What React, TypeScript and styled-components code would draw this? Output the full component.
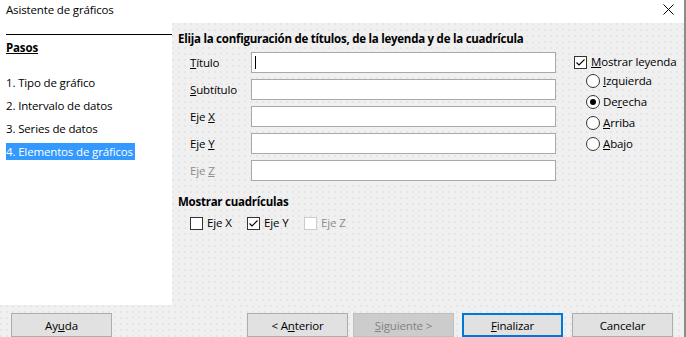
import React from "react";
import styled, { createGlobalStyle } from "styled-components";

const Global = createGlobalStyle`
  html, body { margin: 0; padding: 0; background: #ffffff; }
  body { font-family: "Open Sans", "Noto Sans", sans-serif; font-size: 12px; color: #000; }
  * { box-sizing: border-box; }
`;

const Window = styled.div`
  width: 686px;
  height: 337px;
  display: flex;
  flex-direction: column;
  border-right: 2px solid #8c8c8c;
  overflow: hidden;
  font-family: "Open Sans", sans-serif;
  font-size: 11.5px;
  letter-spacing: -0.15px;
`;

const TitleBar = styled.div`
  height: 23px;
  flex: none;
  display: flex;
  align-items: center;
  justify-content: space-between;
  padding: 0 10px 4px 6px;
  background: #fff;
`;

const CloseIcon = () => (
  <svg width="11" height="11" viewBox="0 0 11 11">
    <path d="M0.5 0.5 L10.5 10.5 M10.5 0.5 L0.5 10.5" stroke="#000" strokeWidth="1" />
  </svg>
);

const Body = styled.div`
  flex: 1;
  display: flex;
  min-height: 0;
`;

const dots = `
  background-color: #f0f0f0;
  background-image: radial-gradient(circle at 1px 1px, #e5e5e5 0.7px, transparent 0.8px);
  background-size: 6px 6px;
`;

const StepsPane = styled.div`
  width: 172px;
  flex: none;
  background: #fff;
  padding-top: 11px;
  padding-left: 6px;
`;

const Rule = styled.div`
  height: 1px;
  background: #000;
  margin-bottom: 5px;
`;

const StepsTitle = styled.div`
  font-weight: 700;
  text-decoration: underline;
  height: 16px;
  line-height: 16px;
  margin-bottom: 18px;
`;

const Step = styled.div<{ $active?: boolean }>`
  height: 17px;
  line-height: 17px;
  margin-bottom: 6px;
  padding-right: 2px;
  background: ${(p) => (p.$active ? "#3399ff" : "transparent")};
  color: ${(p) => (p.$active ? "#fff" : "#000")};
`;

const StepList = styled.div`
  display: flex;
  flex-direction: column;
  align-items: flex-start;
`;

const Content = styled.div`
  flex: 1;
  ${dots}
  padding: 8px 0 0 6px;
  display: flex;
  flex-direction: column;
`;

const Heading = styled.div`
  font-weight: 700;
  height: 16px;
  line-height: 16px;
  letter-spacing: -0.25px;
`;

const Top = styled.div`
  display: flex;
  margin-top: 5px;
`;

const FormGrid = styled.div`
  display: grid;
  grid-template-columns: 61px 305px;
  row-gap: 6px;
  padding-left: 12px;
  align-items: center;
`;

const Label = styled.div<{ $disabled?: boolean }>`
  color: ${(p) => (p.$disabled ? "#8d8d8d" : "#000")};
  line-height: 16px;
`;

const Field = styled.div`
  height: 21px;
  background: #fff;
  border: 1px solid #a9a9a9;
  position: relative;
`;

const Caret = styled.div`
  position: absolute;
  left: 3px;
  top: 3px;
  width: 1px;
  height: 13px;
  background: #000;
`;

const Legend = styled.div`
  margin-left: 18px;
  margin-top: 2px;
  display: flex;
  flex-direction: column;
`;

const CheckRow = styled.label<{ $disabled?: boolean }>`
  display: flex;
  align-items: center;
  gap: 4px;
  height: 16px;
  line-height: 16px;
  color: ${(p) => (p.$disabled ? "#8d8d8d" : "#000")};
`;

const Box = styled.span<{ $disabled?: boolean }>`
  width: 13px;
  height: 13px;
  flex: none;
  background: #fff;
  border: 1px solid ${(p) => (p.$disabled ? "#cccccc" : "#333333")};
  display: flex;
  align-items: center;
  justify-content: center;
`;

const Check = () => (
  <svg width="11" height="11" viewBox="0 0 11 11">
    <path d="M1.5 5.5 L4 8 L9.5 2.5" stroke="#000" strokeWidth="1.1" fill="none" />
  </svg>
);

const Radios = styled.div`
  display: flex;
  flex-direction: column;
  gap: 5px;
  padding-left: 12px;
  margin-top: 3px;
`;

const RadioRow = styled.label`
  display: flex;
  align-items: center;
  gap: 3px;
  height: 16px;
  line-height: 16px;
`;

const Circle = styled.span<{ $on?: boolean }>`
  width: 14px;
  height: 14px;
  border-radius: 50%;
  border: 1px solid #333;
  background: #fff;
  display: flex;
  align-items: center;
  justify-content: center;
  &::after {
    content: "";
    width: 6px;
    height: 6px;
    border-radius: 50%;
    background: ${(p) => (p.$on ? "#000" : "transparent")};
  }
`;

const GridHeading = styled(Heading)`
  margin-top: 13px;
`;

const GridRow = styled.div`
  display: flex;
  padding-left: 12px;
  margin-top: 5px;
`;

const GridItem = styled(CheckRow)`
  width: 57px;
`;

const Footer = styled.div`
  height: 32px;
  flex: none;
  ${dots}
  display: flex;
  align-items: flex-start;
  padding: 8px 0 0 11px;
`;

const Button = styled.button<{ $primary?: boolean; $gap?: number }>`
  width: 101px;
  height: 24px;
  margin-left: ${(p) => p.$gap ?? 0}px;
  font-family: inherit;
  font-size: inherit;
  letter-spacing: inherit;
  color: ${(p) => (p.disabled ? "#838383" : "#000")};
  background: ${(p) => (p.disabled ? "#cccccc" : "#e1e1e1")};
  border: ${(p) =>
    p.$primary ? "2px solid #0078d7" : p.disabled ? "1px solid #bfbfbf" : "1px solid #adadad"};
  padding: 0;
`;

const U = styled.span`
  text-decoration: underline;
`;

export default function App() {
  return (
    <>
      <Global />
      <Window>
        <TitleBar>
          <span>Asistente de gráficos</span>
          <CloseIcon />
        </TitleBar>
        <Body>
          <StepsPane>
            <Rule />
            <StepsTitle>Pasos</StepsTitle>
            <StepList>
              <Step>1. Tipo de gráfico</Step>
              <Step>2. Intervalo de datos</Step>
              <Step>3. Series de datos</Step>
              <Step $active>4. Elementos de gráficos</Step>
            </StepList>
          </StepsPane>
          <Content>
            <Heading>Elija la configuración de títulos, de la leyenda y de la cuadrícula</Heading>
            <Top>
              <FormGrid>
                <Label><U>T</U>ítulo</Label>
                <Field><Caret /></Field>
                <Label><U>S</U>ubtítulo</Label>
                <Field />
                <Label>Eje <U>X</U></Label>
                <Field />
                <Label>Eje <U>Y</U></Label>
                <Field />
                <Label $disabled>Eje <U>Z</U></Label>
                <Field />
              </FormGrid>
              <Legend>
                <CheckRow>
                  <Box><Check /></Box>
                  <span><U>M</U>ostrar leyenda</span>
                </CheckRow>
                <Radios>
                  <RadioRow><Circle /><span><U>I</U>zquierda</span></RadioRow>
                  <RadioRow><Circle $on /><span>De<U>r</U>echa</span></RadioRow>
                  <RadioRow><Circle /><span><U>A</U>rriba</span></RadioRow>
                  <RadioRow><Circle /><span><U>A</U>bajo</span></RadioRow>
                </Radios>
              </Legend>
            </Top>
            <GridHeading>Mostrar cuadrículas</GridHeading>
            <GridRow>
              <GridItem><Box /><span>Eje X</span></GridItem>
              <GridItem><Box><Check /></Box><span>Eje Y</span></GridItem>
              <GridItem $disabled><Box $disabled /><span>Eje Z</span></GridItem>
            </GridRow>
          </Content>
        </Body>
        <Footer>
          <Button>Ay<U>u</U>da</Button>
          <Button $gap={135}>&lt; A<U>n</U>terior</Button>
          <Button $gap={5} disabled><U>S</U>iguiente &gt;</Button>
          <Button $gap={8} $primary><U>F</U>inalizar</Button>
          <Button $gap={9}>Cancelar</Button>
        </Footer>
      </Window>
    </>
  );
}
